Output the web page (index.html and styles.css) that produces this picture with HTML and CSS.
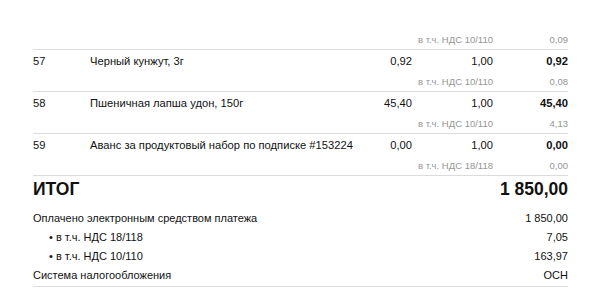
FILE: index.html
```html
<!DOCTYPE html>
<html lang="ru">
<head>
<meta charset="utf-8">
<link rel="stylesheet" href="styles.css">
</head>
<body>
<div class="receipt">
  <div class="item first">
    <div class="row sub">
      <span></span><span></span><span></span><span class="vat">в т.ч. НДС 10/110</span><span class="vsum">0,09</span>
    </div>
  </div>
  <div class="item">
    <div class="row main">
      <span class="num">57</span><span class="name">Черный кунжут, 3г</span><span class="price">0,92</span><span class="qty">1,00</span><span class="sum">0,92</span>
    </div>
    <div class="row sub">
      <span></span><span></span><span></span><span class="vat">в т.ч. НДС 10/110</span><span class="vsum">0,08</span>
    </div>
  </div>
  <div class="item">
    <div class="row main">
      <span class="num">58</span><span class="name">Пшеничная лапша удон, 150г</span><span class="price">45,40</span><span class="qty">1,00</span><span class="sum">45,40</span>
    </div>
    <div class="row sub">
      <span></span><span></span><span></span><span class="vat">в т.ч. НДС 10/110</span><span class="vsum">4,13</span>
    </div>
  </div>
  <div class="item">
    <div class="row main">
      <span class="num">59</span><span class="name">Аванс за продуктовый набор по подписке #153224</span><span class="price">0,00</span><span class="qty">1,00</span><span class="sum">0,00</span>
    </div>
    <div class="row sub">
      <span></span><span></span><span></span><span class="vat">в т.ч. НДС 18/118</span><span class="vsum">0,00</span>
    </div>
  </div>
  <div class="total">
    <div class="total-head"><span>ИТОГ</span><span>1 850,00</span></div>
    <div class="info">
      <div class="line"><span>Оплачено электронным средством платежа</span><span>1 850,00</span></div>
      <div class="line bullet"><span>• в т.ч. НДС 18/118</span><span>7,05</span></div>
      <div class="line bullet"><span>• в т.ч. НДС 10/110</span><span>163,97</span></div>
      <div class="line"><span>Система налогообложения</span><span>ОСН</span></div>
    </div>
  </div>
</div>
</body>
</html>
```
FILE: styles.css
```css
html, body {
  margin: 0;
  padding: 0;
  background: #fff;
}
body {
  font-family: "Liberation Sans", Arial, sans-serif;
  color: #111;
}
.receipt {
  width: 535px;
  margin-left: 33px;
  padding-top: 30px;
}
.item {
  border-top: 1px solid #dcdcdc;
}
.item.first {
  border-top: none;
}
.row {
  display: grid;
  grid-template-columns: 57px minmax(0, 1fr) 65px 81px 75px;
  align-items: center;
}
.row.main {
  height: 22px;
  font-size: 11.2px;
}
.row.sub {
  height: 19px;
  font-size: 9.5px;
  color: #959595;
}
.price, .qty, .sum, .vat, .vsum {
  text-align: right;
  white-space: nowrap;
}
.name {
  white-space: nowrap;
}
.sum {
  font-weight: bold;
}
.total {
  border-top: 1px solid #dcdcdc;
  border-bottom: 1px solid #dcdcdc;
  padding-bottom: 2px;
}
.total-head {
  display: flex;
  justify-content: space-between;
  align-items: center;
  height: 26px;
  font-size: 17.5px;
  font-weight: bold;
  margin-bottom: 6px;
}
.line {
  display: flex;
  justify-content: space-between;
  align-items: center;
  height: 19px;
  font-size: 11px;
}
.line.bullet span:first-child {
  padding-left: 16px;
}
```
